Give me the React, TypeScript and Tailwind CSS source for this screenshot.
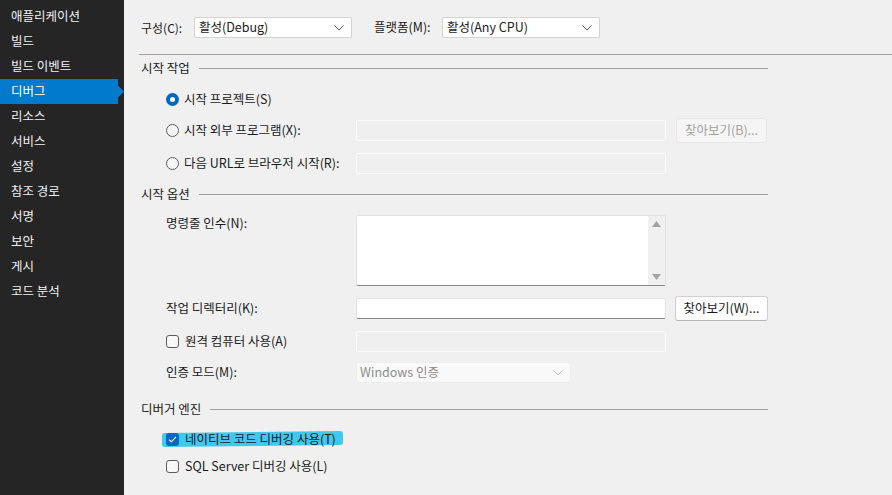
import React from 'react';

const navItems = [
  '애플리케이션',
  '빌드',
  '빌드 이벤트',
  '디버그',
  '리소스',
  '서비스',
  '설정',
  '참조 경로',
  '서명',
  '보안',
  '게시',
  '코드 분석',
];

const Chevron: React.FC<{ color?: string }> = ({ color = '#5f5f5f' }) => (
  <svg width="10" height="6" viewBox="0 0 10 6" fill="none">
    <path d="M0.5 0.5 L5 5 L9.5 0.5" stroke={color} strokeWidth="1" />
  </svg>
);

const Radio: React.FC<{ checked?: boolean }> = ({ checked }) =>
  checked ? (
    <span className="w-[13px] h-[13px] rounded-full bg-[#0067c0] flex items-center justify-center shrink-0">
      <span className="w-[5px] h-[5px] rounded-full bg-white" />
    </span>
  ) : (
    <span className="w-[13px] h-[13px] rounded-full border border-[#5d5d5d] bg-[#f5f5f5] shrink-0" />
  );

const Checkbox: React.FC<{ checked?: boolean }> = ({ checked }) =>
  checked ? (
    <span className="w-[13px] h-[13px] rounded-[3px] bg-[#0067c0] flex items-center justify-center shrink-0">
      <svg width="9" height="7" viewBox="0 0 9 7" fill="none">
        <path d="M1 3.6 L3.3 5.8 L8 1" stroke="#ffffff" strokeWidth="1.1" />
      </svg>
    </span>
  ) : (
    <span className="w-[13px] h-[13px] rounded-[3px] border border-[#5d5d5d] bg-[#f7f7f7] shrink-0" />
  );

const SectionTitle: React.FC<{ title: string; className?: string }> = ({ title, className = '' }) => (
  <div className={`flex items-center h-[20px] w-[627px] ${className}`}>
    <span>{title}</span>
    <div className="flex-1 h-px bg-[#a0a0a0] ml-[9px]" />
  </div>
);

const TextBox: React.FC<{ disabled?: boolean; className?: string }> = ({ disabled, className = '' }) =>
  disabled ? (
    <div className={`w-[310px] h-[21px] border border-[#fafafa] bg-[#efefef] rounded-[2px] ${className}`} />
  ) : (
    <div className={`w-[310px] h-[21px] bg-white border border-[#e3e3e3] border-b-[#868686] rounded-[2px] ${className}`} />
  );

const Button: React.FC<{ label: string; disabled?: boolean }> = ({ label, disabled }) =>
  disabled ? (
    <div className="ml-[10px] w-[91px] h-[25px] rounded-[3px] bg-[#f5f5f5] border border-[#e8e8e8] text-[#a3a3a3] flex items-center justify-center">
      {label}
    </div>
  ) : (
    <div className="ml-[9px] w-[93px] h-[25px] rounded-[3px] bg-white border border-[#cfcfcf] border-b-[#b5b5b5] text-[#1b1b1b] flex items-center justify-center">
      {label}
    </div>
  );

export default function App() {
  return (
    <div
      className="w-[892px] h-[495px] flex overflow-hidden text-[12.5px] text-[#1b1b1b]"
      style={{ fontFamily: '"Noto Sans CJK KR", "Noto Sans", sans-serif' }}
    >
      {/* Sidebar */}
      <div className="w-[124px] h-full bg-[#252526] pt-[4px] shrink-0">
        {navItems.map((item) =>
          item === '디버그' ? (
            <div key={item} className="flex h-[25px]">
              <div className="w-[118px] h-full bg-[#007acc] text-white flex items-center pl-[11px]">{item}</div>
              <svg width="6" height="25" viewBox="0 0 6 25">
                <path d="M0 6.5 L6 12.5 L0 18.5 Z" fill="#007acc" />
              </svg>
            </div>
          ) : (
            <div key={item} className="h-[25px] flex items-center pl-[11px] text-[#f1f1f1]">
              {item}
            </div>
          )
        )}
      </div>

      {/* Main */}
      <div className="flex-1 h-full bg-[#f0f0f0] pt-[17px]">
        <div className="flex items-center h-[21px] pl-[17px]">
          <span className="w-[53px] text-[12px]">구성(C):</span>
          <div className="w-[158px] h-[21px] bg-white border border-[#d3d3d3] rounded-[2px] flex items-center justify-between pl-[4px] pr-[7px]">
            <span>활성(Debug)</span>
            <Chevron />
          </div>
          <span className="ml-[22px] w-[68px]">플랫폼(M):</span>
          <div className="w-[158px] h-[21px] bg-white border border-[#d3d3d3] rounded-[2px] flex items-center justify-between pl-[4px] pr-[7px]">
            <span>활성(Any CPU)</span>
            <Chevron />
          </div>
        </div>

        <div className="mt-[16px] ml-[15px] h-px bg-[#a0a0a0]" />

        <div className="pl-[17px]">
          <SectionTitle title="시작 작업" className="mt-[3px]" />

          <div className="pl-[25px]">
            <div className="flex items-center h-[24px] mt-[9px]">
              <Radio checked />
              <span className="ml-[5px]">시작 프로젝트(S)</span>
            </div>

            <div className="flex items-center h-[26px] mt-[6px]">
              <div className="w-[190px] flex items-center">
                <Radio />
                <span className="ml-[5px]">시작 외부 프로그램(X):</span>
              </div>
              <TextBox disabled />
              <Button label="찾아보기(B)..." disabled />
            </div>

            <div className="flex items-center h-[20px] mt-[10px]">
              <div className="w-[190px] flex items-center">
                <Radio />
                <span className="ml-[5px]">다음 URL로 브라우저 시작(R):</span>
              </div>
              <TextBox disabled className="h-[20px]" />
            </div>
          </div>

          <SectionTitle title="시작 옵션" className="mt-[11px]" />

          <div className="pl-[25px]">
            <div className="flex items-start mt-[11px]">
              <span className="w-[190px] -mt-[1px]">명령줄 인수(N):</span>
              <div className="w-[310px] h-[71px] bg-white border border-[#e3e3e3] border-b-[#868686] rounded-[2px] flex justify-end">
                <div className="w-[17px] h-full bg-[#f0f0f0] flex flex-col items-center justify-between py-[5px]">
                  <svg width="9" height="6" viewBox="0 0 9 6">
                    <path d="M0 6 L4.5 0 L9 6 Z" fill="#a3a3a3" />
                  </svg>
                  <svg width="9" height="6" viewBox="0 0 9 6">
                    <path d="M0 0 L4.5 6 L9 0 Z" fill="#a3a3a3" />
                  </svg>
                </div>
              </div>
            </div>

            <div className="flex items-center h-[25px] mt-[10px]">
              <span className="w-[190px]">작업 디렉터리(K):</span>
              <TextBox />
              <Button label="찾아보기(W)..." />
            </div>

            <div className="flex items-center h-[21px] mt-[10px]">
              <div className="w-[190px] flex items-center">
                <Checkbox />
                <span className="ml-[6px]">원격 컴퓨터 사용(A)</span>
              </div>
              <TextBox disabled />
            </div>

            <div className="flex items-center h-[21px] mt-[10px]">
              <span className="w-[190px]">인증 모드(M):</span>
              <div className="w-[215px] h-[21px] bg-[#f9f9f9] border border-[#ededed] rounded-[2px] flex items-center justify-between pl-[3px] pr-[7px] text-[#8c8c8c]">
                <span>Windows 인증</span>
                <Chevron color="#c2c2c2" />
              </div>
            </div>
          </div>

          <SectionTitle title="디버거 엔진" className="mt-[16px]" />

          <div className="pl-[25px]">
            <div className="relative flex items-center h-[20px] mt-[10px]">
              <div className="absolute left-[-4px] top-[3px] w-[181px] h-[14px] bg-[#40c8ee] rounded-[3px] -rotate-[0.6deg]" />
              <div className="relative flex items-center">
                <Checkbox checked />
                <span className="ml-[6px]">네이티브 코드 디버깅 사용(T)</span>
              </div>
            </div>

            <div className="flex items-center h-[20px] mt-[7px]">
              <Checkbox />
              <span className="ml-[6px]">SQL Server 디버깅 사용(L)</span>
            </div>
          </div>
        </div>
      </div>
    </div>
  );
}
